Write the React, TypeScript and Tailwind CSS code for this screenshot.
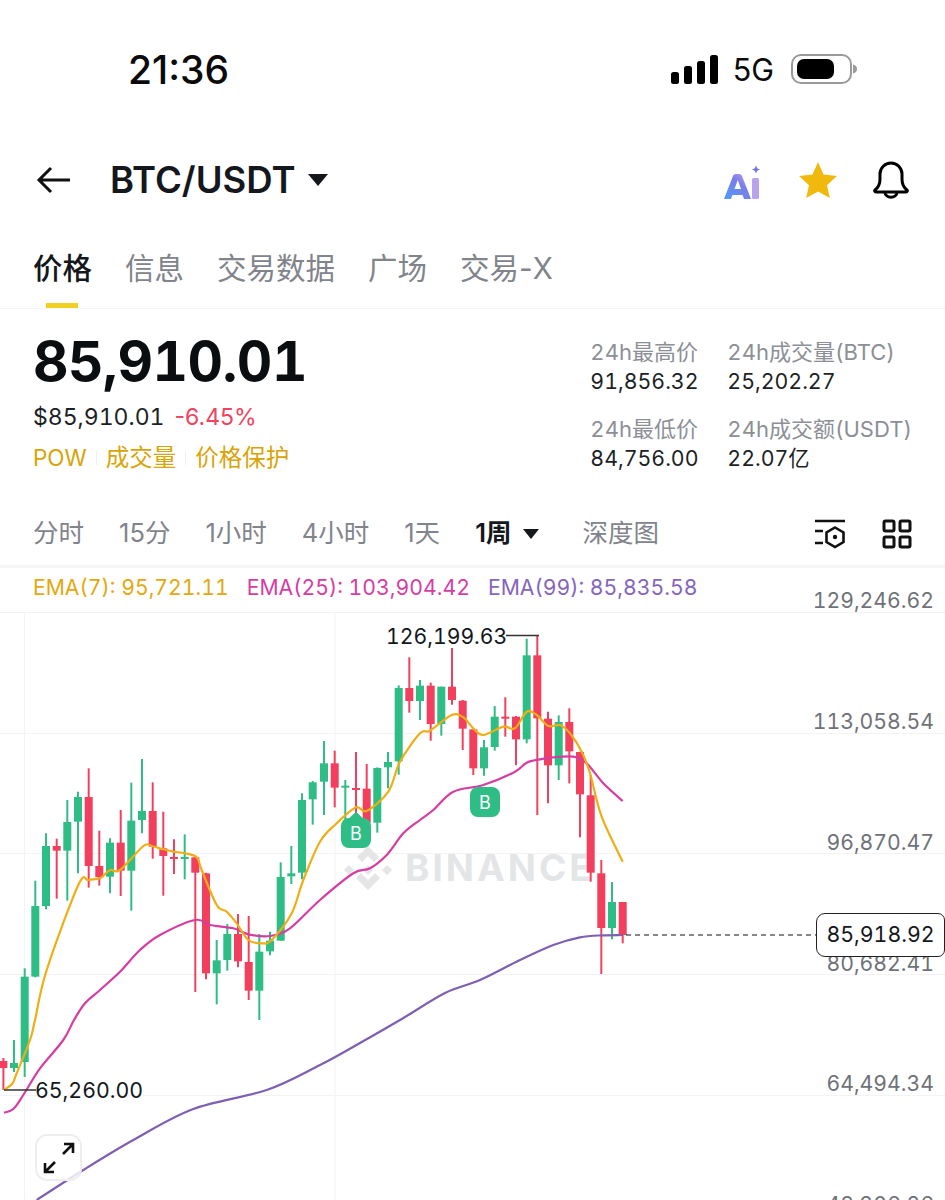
import React from "react";

const F = '[font-family:Inter,"Noto_Sans_CJK_SC",sans-serif]';

// [x, colour, wickTop, wickBottom, bodyTop, bodyBottom]: wick/body in zoomed units (y = 620 + v / 3)
type C = [number, "g" | "r", number, number, number, number];
const raw: C[] = [
  [3.4, "r", 1314, 1410, 1323, 1344],
  [14, "g", 1260, 1356, 1329, 1344],
  [24.7, "g", 1045, 1371, 1070, 1326],
  [35.3, "g", 782, 1072, 858, 1070],
  [46, "g", 640, 868, 678, 858],
  [56.7, "r", 656, 836, 678, 692],
  [67.3, "g", 540, 842, 606, 692],
  [78, "g", 515, 760, 531, 605],
  [88.7, "r", 445, 803, 531, 738],
  [99.3, "r", 632, 797, 738, 772],
  [110, "g", 655, 820, 668, 770],
  [120.7, "r", 570, 828, 668, 752],
  [131.3, "g", 488, 872, 602, 752],
  [142, "g", 417, 640, 573, 600],
  [152.7, "r", 487, 716, 573, 680],
  [163.3, "r", 575, 827, 685, 708],
  [174, "r", 658, 762, 711, 716],
  [184.7, "g", 643, 778, 711, 716],
  [195.3, "r", 712, 1116, 712, 758],
  [206, "r", 758, 1078, 760, 1060],
  [216.7, "g", 960, 1153, 1021, 1060],
  [227.3, "g", 912, 1052, 942, 1020],
  [238, "r", 882, 1042, 942, 1024],
  [248.7, "r", 888, 1140, 1026, 1112],
  [259.3, "g", 942, 1200, 995, 1112],
  [270, "g", 935, 1006, 962, 994],
  [280.7, "g", 727, 962, 771, 962],
  [291.3, "g", 678, 792, 760, 769],
  [302, "g", 520, 778, 540, 758],
  [312.7, "g", 483, 614, 487, 538],
  [324, "g", 363, 585, 430, 485],
  [334.7, "r", 392, 562, 430, 503],
  [345.3, "g", 480, 610, 497, 502],
  [356, "r", 396, 590, 504, 509],
  [366.7, "r", 432, 610, 506, 608],
  [377.3, "g", 442, 638, 444, 608],
  [388, "g", 396, 505, 426, 442],
  [398.7, "g", 196, 464, 204, 424],
  [409.3, "r", 112, 278, 204, 243],
  [420, "g", 180, 300, 197, 243],
  [430.7, "r", 188, 362, 197, 312],
  [441.3, "g", 200, 347, 200, 312],
  [452, "r", 84, 254, 200, 240],
  [462.7, "r", 240, 390, 242, 326],
  [473.3, "r", 330, 465, 328, 445],
  [484, "g", 360, 467, 382, 445],
  [494.7, "g", 258, 392, 290, 381],
  [505.3, "r", 232, 350, 290, 295],
  [516, "r", 288, 436, 290, 358],
  [526.7, "g", 56, 370, 106, 358],
  [537.3, "r", 45, 585, 106, 295],
  [548, "r", 275, 550, 296, 436],
  [558.7, "g", 286, 480, 306, 436],
  [569.3, "r", 265, 490, 306, 394],
  [580, "r", 395, 652, 396, 523],
  [590.7, "r", 465, 785, 526, 758],
  [601.3, "r", 720, 1062, 760, 924],
  [612, "g", 786, 958, 846, 924],
  [622.7, "r", 846, 970, 846, 945],
];

const z1 = (p: number[][]) => p.map(([x, y]) => [x / 3, 620 + y / 3]);
const z2 = (p: number[][]) => p.map(([x, y]) => [320 + x / 3, 620 + y / 3]);
const z5 = (p: number[][]) => p.map(([x, y]) => [x / 3, 1040 + y / 3]);

// smooth line through the sampled points
function smooth(p: number[][]) {
  let d = `M${p[0][0].toFixed(1)} ${p[0][1].toFixed(1)}`;
  for (let i = 0; i < p.length - 1; i++) {
    const a = p[Math.max(i - 1, 0)];
    const b = p[i];
    const c = p[i + 1];
    const e = p[Math.min(i + 2, p.length - 1)];
    const k = 1 / 6;
    d += `C${(b[0] + (c[0] - a[0]) * k).toFixed(1)} ${(b[1] + (c[1] - a[1]) * k).toFixed(1)} ${(c[0] - (e[0] - b[0]) * k).toFixed(1)} ${(c[1] - (e[1] - b[1]) * k).toFixed(1)} ${c[0].toFixed(1)} ${c[1].toFixed(1)}`;
  }
  return d;
}

const ema7 = [
  ...z5([[12, 150], [36, 132], [48, 105], [90, 0]]),
  ...z1([[105, 1200], [140, 1050], [235, 795], [265, 780], [300, 775], [330, 750], [360, 750], [430, 678], [455, 678], [490, 688], [520, 695], [555, 700], [590, 712], [605, 750], [650, 855], [680, 875], [710, 910], [745, 960], [785, 970], [815, 960], [875, 880], [910, 780], [960, 665]]),
  ...z2([[50, 610], [108, 562], [140, 573], [205, 515], [240, 425], [300, 340], [330, 332], [395, 285], [430, 292], [460, 325], [490, 345], [550, 320], [585, 325], [620, 275], [650, 285], [685, 318], [720, 315], [750, 340], [785, 395], [810, 460], [845, 590], [908, 725]]),
];
const ema25 = [
  ...z5([[12, 218], [40, 207], [70, 165], [120, 85], [190, 0]]),
  ...z1([[222, 1200], [255, 1150], [300, 1110], [360, 1055], [420, 990], [480, 945], [585, 900], [630, 915], [700, 925], [745, 943], [810, 948], [870, 925], [960, 840]]),
  ...z2([[100, 760], [150, 745], [200, 705], [250, 640], [300, 600], [340, 570], [400, 515], [490, 495], [585, 455], [620, 428], [660, 418], [700, 412], [760, 410], [800, 430], [850, 490], [908, 543]]),
];
const ema99 = [
  ...z5([[110, 480], [250, 390], [400, 300], [580, 207], [800, 150], [960, 75]]),
  [360, 1043], [400, 1020], [445, 993],
  ...z2([[480, 1080], [600, 1020], [700, 975], [780, 952], [850, 946], [908, 945]]),
];

const axis: [string, number][] = [
  ["129,246.62", 600],
  ["113,058.54", 721],
  ["96,870.47", 842],
  ["80,682.41", 963],
  ["64,494.34", 1083],
  ["48,306.26", 1204],
];

function Stat({ label, value }: { label: string; value: string }) {
  return (
    <div className="flex flex-col">
      <span className="text-[22px] leading-[28px] text-[#8c8f96]">{label}</span>
      <span className="text-[21.300px] leading-[30px] text-[#1c1f26]">{value}</span>
    </div>
  );
}

function Marker({ tip }: { tip?: boolean }) {
  return (
    <span className="relative flex h-[30px] w-[30px] items-center justify-center rounded-[8px] bg-[#2ebd85] text-[18px] text-white">
      {tip && <span className="absolute -top-[4px] left-[9px] h-[12px] w-[12px] rotate-45 rounded-[2px] bg-[#2ebd85]" />}
      <span className="relative">B</span>
    </span>
  );
}

export default function App() {
  return (
    <div className={`relative h-[1200px] w-[945px] overflow-hidden bg-white tabular-nums ${F}`}>
      {/* status bar */}
      <div className="flex h-[140px] items-start justify-between pl-[128px] pr-[86px] pt-[46px] [font-variant-numeric:normal]">
        <span className="text-[39px] font-medium leading-[48px] text-[#0b0b0b]">21:36</span>
        <div className="flex items-center pt-[8px]">
          <svg width="47" height="30" viewBox="0 0 47 30" fill="#000">
            <rect x="0" y="17" width="8" height="12" rx="2.5" />
            <rect x="13" y="11" width="8" height="18" rx="2.5" />
            <rect x="26" y="6" width="8" height="23" rx="2.5" />
            <rect x="39" y="0" width="8" height="29" rx="2.5" />
          </svg>
          <span className="ml-[15px] text-[30.500px] leading-[32px] text-[#0b0b0b]">5G</span>
          <svg className="ml-[17px]" width="68" height="32" viewBox="0 0 68 32">
            <rect x="1" y="1" width="59" height="28" rx="9" fill="none" stroke="#9a9a9a" strokeWidth="2" />
            <rect x="6" y="5" width="37" height="20" rx="7" fill="#000" />
            <path d="M62 10.500c3 .5 4 2.500 4 4.500s-1 4-4 4.500z" fill="#9a9a9a" />
          </svg>
        </div>
      </div>

      {/* header */}
      <div className="flex h-[80px] items-center justify-between pl-[36px] pr-[36px]">
        <div className="flex items-center">
          <svg width="34" height="28" viewBox="0 0 34 28" fill="none" stroke="#111" strokeWidth="3">
            <path d="M34 14H3M15 2 3 14l12 12" />
          </svg>
          <span className="ml-[40px] text-[36.500px] font-semibold text-[#14171c]">BTC/USDT</span>
          <svg className="ml-[12px]" width="20" height="12" viewBox="0 0 20 12" fill="#14171c">
            <path d="M0 0h20L10 12z" />
          </svg>
        </div>
        <div className="flex items-center">
          <svg className="mt-[5px]" width="40" height="40" viewBox="0 0 40 40">
            <defs>
              <linearGradient id="ai" x1="0" y1="1" x2="1" y2="0">
                <stop offset="0" stopColor="#4f9cf9" />
                <stop offset="0.6" stopColor="#7a7de8" />
                <stop offset="1" stopColor="#c5a8ee" />
              </linearGradient>
            </defs>
            <path d="M2 36 11 13a3 3 0 0 1 3-2h3a3 3 0 0 1 3 2l9 23h-7l-1.500-4H10.500L9 36zM12.500 26h6.500l-3.200-9z" fill="url(#ai)" />
            <rect x="30" y="15" width="7" height="21" rx="1.500" fill="#b9a3ea" />
            <path d="M34 2c.6 3 1.500 4 4.500 4.500-3 .6-3.900 1.500-4.500 4.500-.6-3-1.500-3.900-4.500-4.500C32.500 6 33.400 5 34 2z" fill="#6d78e6" />
          </svg>
          <svg className="ml-[37px]" width="38" height="36" viewBox="0 0 38 36" fill="#f0b90b">
            <path d="M19 0l5.500 12.500L38 14l-10 9.200L30.800 36 19 29.500 7.200 36 10 23.200 0 14l13.500-1.500z" />
          </svg>
          <svg className="ml-[36px]" width="36" height="38" viewBox="0 0 36 38" fill="none" stroke="#000" strokeWidth="3" strokeLinejoin="round">
            <path d="M2 29c4-3 5-6 5-11V13a11 11 0 0 1 22 0v5c0 5 1 8 5 11 .8 1 .2 2-1 2H3c-1.200 0-1.800-1-1-2z" />
            <path d="M12 31c0 7 12 7 12 0" />
          </svg>
        </div>
      </div>

      {/* tabs */}
      <div className="flex h-[89px] items-start gap-[33px] border-b border-[#f3f4f5] pl-[33px] pt-[26px] [font-variant-numeric:normal]">
        {["价格", "信息", "交易数据", "广场", "交易-X"].map((t, i) => (
          <div key={t} className="relative h-[62px]">
            <span className={`text-[29.500px] leading-[44px] ${i === 0 ? "font-medium text-[#14171c]" : "text-[#81848b]"}`}>{t}</span>
            {i === 0 && <span className="absolute bottom-0 left-[13px] h-[5px] w-[32px] bg-[#f0d020]" />}
          </div>
        ))}
      </div>

      {/* price block */}
      <div className="flex h-[193px] justify-between pl-[33px] pr-[33px] pt-[18px]">
        <div className="flex flex-col">
          <span className="text-[55px] font-bold leading-[68px] tracking-[-0.5px] text-[#0b0e11]">85,910.01</span>
          <div className="mt-[8px] flex items-center gap-[10px] text-[23px] leading-[28px]">
            <span className="text-[#1c1f26]">$85,910.01</span>
            <span className="text-[#f0435e] [font-variant-numeric:normal]">-6.45%</span>
          </div>
          <div className="mt-[12px] flex items-center gap-[9px] text-[23.500px] leading-[30px] text-[#d9a406]">
            <span className="text-[22.500px]">POW</span>
            <span className="h-[14px] w-[1px] bg-[#eeeeee]" />
            <span>成交量</span>
            <span className="h-[14px] w-[1px] bg-[#eeeeee]" />
            <span>价格保护</span>
          </div>
        </div>
        <div className="grid grid-cols-[137px_auto] content-start gap-y-[19px] pt-[11px]">
          <Stat label="24h最高价" value="91,856.32" />
          <Stat label="24h成交量(BTC)" value="25,202.27" />
          <Stat label="24h最低价" value="84,756.00" />
          <Stat label="24h成交额(USDT)" value="22.07亿" />
        </div>
      </div>

      {/* interval bar */}
      <div className="flex h-[66px] items-center justify-between border-b-[3px] border-[#f6f6f7] pl-[33px] pr-[33px] [font-variant-numeric:normal]">
        <div className="flex items-center gap-[35px] text-[25.500px] text-[#81848b]">
          <span>分时</span>
          <span>15分</span>
          <span>1小时</span>
          <span>4小时</span>
          <span>1天</span>
          <span className="flex items-center gap-[12px] font-semibold text-[#14171c]">
            1周
            <svg width="16" height="10" viewBox="0 0 16 10" fill="#14171c"><path d="M0 0h16L8 10z" /></svg>
          </span>
          <span className="ml-[8px]">深度图</span>
        </div>
        <div className="flex items-center gap-[36px]">
          <svg width="32" height="30" viewBox="0 0 32 30" fill="none" stroke="#111" strokeWidth="2.600">
            <path d="M1 2h30M1 12h8M1 24h8" />
            <path d="M21 8.500l8.500 5v9.500L21 28l-8.500-5v-9.500z" />
            <circle cx="21" cy="18" r="2.200" fill="#111" stroke="none" />
          </svg>
          <svg width="30" height="30" viewBox="0 0 30 30" fill="none" stroke="#111" strokeWidth="3">
            <rect x="2" y="2" width="10" height="10" rx="1.500" />
            <rect x="18" y="2" width="10" height="10" rx="1.500" />
            <rect x="2" y="18" width="10" height="10" rx="1.500" />
            <rect x="18" y="18" width="10" height="10" rx="1.500" />
          </svg>
        </div>
      </div>

      {/* chart: free canvas */}
      <div className="absolute left-0 top-0 h-[1200px] w-[945px]">
        <span className="absolute left-[405px] top-[845px] text-[37px] font-bold leading-[46px] tracking-[3px] text-[#e4e5e7]">BINANCE</span>

        <svg className="absolute left-0 top-0" width="945" height="1200" viewBox="0 0 945 1200" fill="none">
          {[612, 733, 853, 974, 1095].map((y) => (
            <line key={y} x1="0" x2="945" y1={y + 0.5} y2={y + 0.5} stroke="#f3f3f4" />
          ))}
          {[24.5, 335].map((x) => (
            <line key={x} x1={x} x2={x} y1="612" y2="1200" stroke="#f3f3f4" />
          ))}
          <g fill="#e4e5e7" transform="translate(344 846)">
            <path d="M24 0l11 11-5 5-6-6-6 6-5-5zM5 19l5 5-5 5-5-5zM43 19l5 5-5 5-5-5zM24 19l5 5-5 5-5-5zM12 32l5-5 7 7 7-7 5 5-12 12z" />
          </g>
          {raw.map(([x, c, wt, wb, bt, bb], i) => {
            const col = c === "g" ? "#2ebd85" : "#f23f5d";
            const w1 = 620 + wt / 3;
            const w2 = 620 + wb / 3;
            const b1 = 620 + bt / 3;
            const b2 = 620 + bb / 3;
            return (
              <g key={i}>
                <line x1={x} x2={x} y1={w1} y2={w2} stroke={col} strokeWidth="2" />
                <rect x={x - 4} y={b1} width="8" height={Math.max(b2 - b1, 2)} fill={col} />
              </g>
            );
          })}
          <path d={smooth(ema99)} stroke="#7e5fb2" strokeWidth="2.200" />
          <path d={smooth(ema25)} stroke="#d63da3" strokeWidth="2.200" />
          <path d={smooth(ema7)} stroke="#eeae14" strokeWidth="2.200" />
          <line x1="626" x2="818" y1="935" y2="935" stroke="#111" strokeDasharray="5 4" />
          <path d="M506 635.500h33" stroke="#333" strokeWidth="1.500" />
          <path d="M4 1090h32" stroke="#333" strokeWidth="1.500" />
        </svg>

        <div className="absolute left-[33px] top-[572px] flex gap-[18px] text-[21.200px] leading-[30px]">
          <span className="text-[#e3a90e]">EMA(7): 95,721.11</span>
          <span className="text-[#d63da3]">EMA(25): 103,904.42</span>
          <span className="text-[#8466bd]">EMA(99): 85,835.58</span>
        </div>

        {axis.map(([t, y]) => (
          <span
            key={t}
            className="absolute right-[11px] -translate-y-1/2 text-[21.200px] leading-[28px] text-[#6f7278]"
            style={{ top: y }}
          >
            {t}
          </span>
        ))}

        <span className="absolute left-[386px] top-[622px] text-[21.200px] leading-[28px] text-[#14171c]">126,199.63</span>
        <span className="absolute left-[35px] top-[1076px] text-[21.300px] leading-[28px] text-[#14171c]">65,260.00</span>

        <div className="absolute left-[341px] top-[818px]"><Marker tip /></div>
        <div className="absolute left-[470px] top-[787px]"><Marker /></div>

        <div className="absolute left-[816px] top-[913px] flex h-[44px] w-[129px] items-center justify-center rounded-l-[9px] rounded-r-[7px] border border-[#222] bg-white text-[21.300px] text-[#14171c]">
          85,918.92
        </div>

        <div className="absolute left-[35px] top-[1134px] flex h-[47px] w-[47px] items-center justify-center rounded-[12px] border-2 border-[#eeeeef] bg-white/80">
          <svg width="32" height="32" viewBox="0 0 32 32" fill="none" stroke="#111" strokeWidth="2.600">
            <path d="M20 12 30 2M21 2h9v9M12 20 2 30M2 21v9h9" />
          </svg>
        </div>
      </div>
    </div>
  );
}
